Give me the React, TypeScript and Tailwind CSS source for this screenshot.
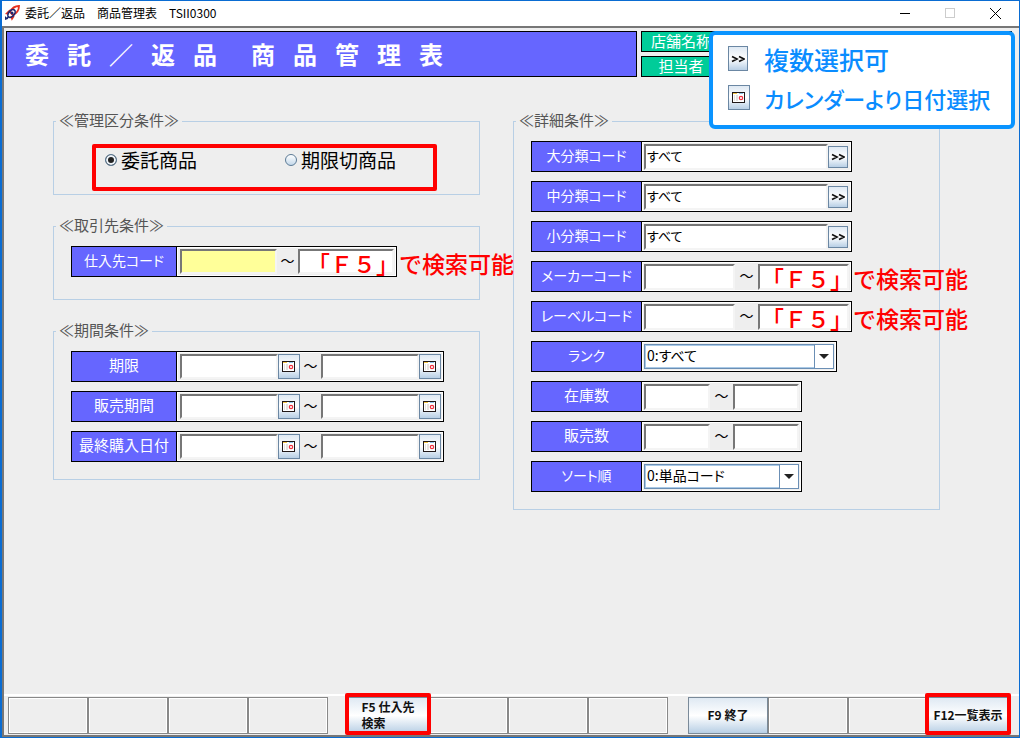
import { useId, useState } from 'react'
import type { ReactNode } from 'react'

const BEVEL = 'border-2 border-t-[#777] border-l-[#777] border-r-[#f4f4f4] border-b-[#f4f4f4] outline-none px-px text-[13px] text-black'
const METAL = 'bg-linear-to-b from-[#dfe9f3] via-white to-[#b8cfe5]'
const KANA = "[font-feature-settings:'palt']"

function RocketIcon() {
  return (
    <svg viewBox="0 0 16 16" className="w-4 h-4 shrink-0" fill="none">
      <path d="M15 1c-4 0-7 2-9 6l3 3c4-2 6-5 6-9Z" fill="#fff" stroke="#e8301c" strokeWidth="1.8" />
      <path d="M6 5 2.500 8.500 5 9M10 11l-2 3-1-3" stroke="#e8301c" strokeWidth="1.500" />
      <ellipse cx="7.500" cy="8.500" rx="4.500" ry="2.800" transform="rotate(-48 7.5 8.5)" stroke="#1c2870" strokeWidth="1.600" />
      <circle cx="8" cy="8" r="1.500" fill="#1c2870" />
      <path d="M1 15v-4l1.500 1.500L5 11l-1 3Z" fill="#1c2870" />
    </svg>
  )
}

function CalendarIcon() {
  return (
    <svg viewBox="0 0 14 12" className="w-[14px] h-3 shrink-0" shapeRendering="crispEdges">
      <rect x="0" y="0" width="13" height="11" fill="#201818" />
      <rect x="1" y="1" width="11" height="9" fill="#fff" />
      <rect x="1" y="1" width="4" height="1" fill="#f5c646" />
      <rect x="7" y="1" width="4" height="1" fill="#8cc8ea" />
      <rect x="2" y="3" width="1" height="6" fill="#e6e2de" />
      <rect x="4" y="3" width="2" height="6" fill="#e6e2de" />
      <circle cx="9" cy="6" r="1.700" fill="none" stroke="#ef3340" strokeWidth="1.200" shapeRendering="auto" />
    </svg>
  )
}

function CalendarButton() {
  return (
    <button type="button" aria-label="カレンダー"
      className={`w-[22px] h-[25px] shrink-0 flex items-center justify-center border border-[#6b87a3] ${METAL}`}>
      <CalendarIcon />
    </button>
  )
}

function MultiButton({ tall }: { tall?: boolean }) {
  return (
    <button type="button" aria-label="複数選択"
      className={`w-5 shrink-0 flex items-center justify-center border border-[#6b87a3] ${METAL} ${tall ? 'h-[25px]' : 'h-[22px]'}`}>
      <svg viewBox="0 0 14 8" className="w-[14px] h-2 shrink-0" fill="none" stroke="#111" strokeWidth="1.700">
        <path d="M1 1.500 6 4 1 6.500M8 1.500 13 4 8 6.500" />
      </svg>
    </button>
  )
}

function Tilde({ wide }: { wide?: boolean }) {
  return <span className={`pb-[3px] text-center text-sm text-black ${wide ? 'w-[23px]' : 'w-[21px]'}`}>～</span>
}

function Group({ title, className, children }: { title: string; className: string; children: ReactNode }) {
  return (
    <fieldset className={`min-w-0 border border-[#b8cfe5] pl-[17px] pt-[10px] ${className}`}>
      <legend className="-ml-[15px] px-[3px] pb-[2px] h-5 leading-[18px] text-[15px] text-[#555]">{title}</legend>
      <div className="flex flex-col gap-[9px]">{children}</div>
    </fieldset>
  )
}

function Row({ id, label, wide, children }: { id: string; label: string; wide?: boolean; children: ReactNode }) {
  const size = /[ァ-ー]/.test(label) ? 'text-sm' : 'text-[15px]'
  return (
    <div className="relative w-fit h-[31px] flex border border-black bg-[#eee]">
      <label htmlFor={id}
        className={`flex items-center justify-center pb-[3px] border-r border-black bg-[#6666ff] text-white whitespace-nowrap ${size} ${KANA} ${wide ? 'w-[110px]' : 'w-[105px]'}`}>
        {label}
      </label>
      <div className={`flex items-center border border-white ${wide ? 'px-px' : 'pl-[2px] pr-px'}`}>{children}</div>
    </div>
  )
}

function DateRow({ label }: { label: string }) {
  const id = useId()
  return (
    <Row id={id} label={label}>
      <input id={id} className={`w-[98px] h-[25px] bg-white ${BEVEL}`} />
      <CalendarButton />
      <Tilde />
      <input aria-label={`${label} 終了`} className={`w-[98px] h-[25px] bg-white ${BEVEL}`} />
      <CalendarButton />
    </Row>
  )
}

function CategoryRow({ label }: { label: string }) {
  const id = useId()
  return (
    <Row id={id} label={label} wide>
      <input id={id} defaultValue="すべて" className={`w-[184px] h-[26px] pb-[3px] bg-white ${BEVEL} ${KANA}`} />
      <MultiButton />
      <span className="w-px" />
    </Row>
  )
}

function RangeRow({ label, size, children }: { label: string; size: 'code' | 'count'; children?: ReactNode }) {
  const id = useId()
  const width = size === 'code' ? 'w-[91px]' : 'w-[66px]'
  return (
    <Row id={id} label={label} wide>
      <input id={id} className={`${width} h-[26px] bg-white ${BEVEL}`} />
      <Tilde wide />
      <input aria-label={`${label} 終了`} className={`${width} h-[26px] bg-white ${BEVEL}`} />
      {children}
    </Row>
  )
}

function SelectRow({ label, options, width }: { label: string; options: string[]; width: string }) {
  const id = useId()
  return (
    <Row id={id} label={label} wide>
      <div className={`relative h-[25px] border border-[#6b8fb5] ${width}`}>
        <select id={id} className={`block appearance-none w-full h-full pl-px pr-5 pb-[3px] bg-white border border-[#a9c9e6] outline-none text-sm leading-4 text-black ${KANA}`}>
          {options.map((o) => <option key={o}>{o}</option>)}
        </select>
        <span className="pointer-events-none absolute inset-y-0 right-0 w-[19px] flex items-center justify-center border-l border-[#6b8fb5] bg-white">
          <svg viewBox="0 0 10 5" className="w-[10px] h-[5px]"><path d="M0 0h10L5 5Z" fill="#222" /></svg>
        </span>
      </div>
    </Row>
  )
}

function Hint({ className }: { className: string }) {
  return (
    <span className={`pointer-events-none absolute top-0 whitespace-nowrap text-[23px] leading-8 font-medium text-[#ff0000] ${className}`}>
      「Ｆ５」で検索可能
    </span>
  )
}

function Radio({ label, checked, onChange }: { label: string; checked: boolean; onChange: () => void }) {
  return (
    <label className="h-5 flex items-center gap-1 text-[19px] leading-5 text-black">
      <input type="radio" name="kubun" checked={checked} onChange={onChange}
        className="appearance-none w-3 h-3 rounded-full border border-[#5c7b96] bg-linear-to-b from-white to-[#c4d8ea] checked:bg-none checked:bg-[#222] checked:shadow-[inset_0_0_0_2px_#eef4fa]" />
      {label}
    </label>
  )
}

const FUNCTION_KEYS: { label?: string; marked?: boolean }[][] = [
  [{}, {}, {}, {}],
  [{ label: 'F5 仕入先\n検索', marked: true }, {}, {}, {}],
  [{ label: 'F9 終了' }, {}, {}, { label: 'F12一覧表示', marked: true }],
]

function FunctionKey({ label, marked }: { label?: string; marked?: boolean }) {
  if (!label) return <button type="button" disabled aria-label="未割当" className="flex-1 border border-[#888] shadow-[inset_0_0_0_1px_#fff]" />
  return (
    <button type="button" className={`relative flex-1 flex items-center justify-center pb-px border border-[#7a8a99] whitespace-pre text-left text-xs leading-4 font-bold text-[#111] ${METAL}`}>
      {label}
      {marked && <span className="pointer-events-none absolute -inset-x-1 -top-[5px] -bottom-[2px] border-4 border-[#ff0000] rounded-xs" />}
    </button>
  )
}

export default function App() {
  const [kubun, setKubun] = useState('委託商品')

  return (
    <div className="min-h-screen flex flex-col bg-white border border-l-2 border-[#0a6cd2] font-['Noto_Sans_CJK_JP',sans-serif]">
      <header className="h-[25px] shrink-0 flex items-center pl-[2px] pb-px text-xs text-black">
        <RocketIcon />
        <span className="ml-[5px] flex-1 whitespace-pre">委託／返品　商品管理表　TSII0300</span>
        <button type="button" aria-label="最小化" className="w-[45px] h-full flex items-center justify-center">
          <span className="w-[10px] h-px bg-black" />
        </button>
        <button type="button" aria-label="最大化" disabled className="w-[45px] h-full flex items-center justify-center">
          <span className="w-[10px] h-[10px] border border-[#ccc]" />
        </button>
        <button type="button" aria-label="閉じる" className="w-[47px] h-full flex items-center justify-center">
          <svg viewBox="0 0 11 11" className="w-[11px] h-[11px]" stroke="#000"><path d="M0 0l11 11M11 0 0 11" /></svg>
        </button>
      </header>

      <main className="flex-1 flex flex-col bg-[#eee] border-t-2 border-l-2 border-[#777]">
        <div className="relative grid grid-cols-[1fr_371px] gap-x-1 mt-[3px] ml-[2px] mr-[7px] h-[46px]">
          <h1 className="flex items-center gap-[34px] pl-[18px] border border-black bg-[#6666ff] text-white text-2xl font-bold">
            {['委託／返品', '商品管理表'].map((word) => (
              <span key={word} className="flex gap-[18px]">
                {[...word].map((ch, i) => <span key={i}>{ch}</span>)}
              </span>
            ))}
          </h1>
          <div className="flex flex-col justify-between">
            {['店舗名称', '担当者'].map((name) => (
              <div key={name} className="h-[21px] flex border border-black">
                <span className="w-[79px] flex items-center justify-center pb-[2px] border-r border-black bg-[#00cc99] text-white text-[15px] leading-4">{name}</span>
              </div>
            ))}
          </div>
          <div className={`absolute top-0 -right-[3px] w-[306px] h-[98px] flex flex-col justify-center gap-[14px] pb-1 pl-[15px] border-4 border-[#0a94ff] rounded-md bg-white font-medium leading-6 text-[#0a8cff] whitespace-nowrap ${KANA}`}>
            <div className="h-[25px] flex items-center gap-4 text-[25px]"><MultiButton tall />複数選択可</div>
            <div className="h-[25px] flex items-center gap-[14px] text-[22px]"><CalendarButton />カレンダーより日付選択</div>
          </div>
        </div>

        <div className="flex-1 grid grid-cols-2 items-start gap-x-[33px] pt-[34px] pl-[49px] pr-[79px]">
          <div className="flex flex-col gap-[21px]">
            <Group title="≪管理区分条件≫" className="h-[84px]">
              <div className="ml-[21px] w-[345px] h-[47px] mt-[3px] flex gap-[88px] pl-[9px] pt-[2px] border-4 border-[#ff0000] rounded-xs">
                {['委託商品', '期限切商品'].map((k) => (
                  <Radio key={k} label={k} checked={kubun === k} onChange={() => setKubun(k)} />
                ))}
              </div>
            </Group>
            <Group title="≪取引先条件≫" className="pb-[22px]">
              <Row id="supplier" label="仕入先コード">
                <input id="supplier" className={`w-[97px] h-[25px] bg-[#ffff99] ${BEVEL}`} />
                <Tilde />
                <input aria-label="仕入先コード 終了" className={`w-24 h-[25px] bg-white ${BEVEL}`} />
                <Hint className="left-[235px]" />
              </Row>
            </Group>
            <Group title="≪期間条件≫" className="pb-[17px]">
              <DateRow label="期限" />
              <DateRow label="販売期間" />
              <DateRow label="最終購入日付" />
            </Group>
          </div>

          <Group title="≪詳細条件≫" className="pb-[17px]">
            <CategoryRow label="大分類コード" />
            <CategoryRow label="中分類コード" />
            <CategoryRow label="小分類コード" />
            <RangeRow label="メーカーコード" size="code"><Hint className="left-[229px]" /></RangeRow>
            <RangeRow label="レーベルコード" size="code"><Hint className="left-[229px]" /></RangeRow>
            <SelectRow label="ランク" options={['0:すべて']} width="w-[190px]" />
            <RangeRow label="在庫数" size="count" />
            <RangeRow label="販売数" size="count" />
            <SelectRow label="ソート順" options={['0:単品コード']} width="w-[155px]" />
          </Group>
        </div>

        <footer className="flex gap-5 pl-1 pr-[11px] pt-px pb-px border-t-2 border-t-white border-b-2 border-b-[#777]">
          {FUNCTION_KEYS.map((keys, g) => (
            <div key={g} className="flex-1 flex h-[37px]">
              {keys.map((k, i) => <FunctionKey key={i} {...k} />)}
            </div>
          ))}
        </footer>
      </main>
    </div>
  )
}
